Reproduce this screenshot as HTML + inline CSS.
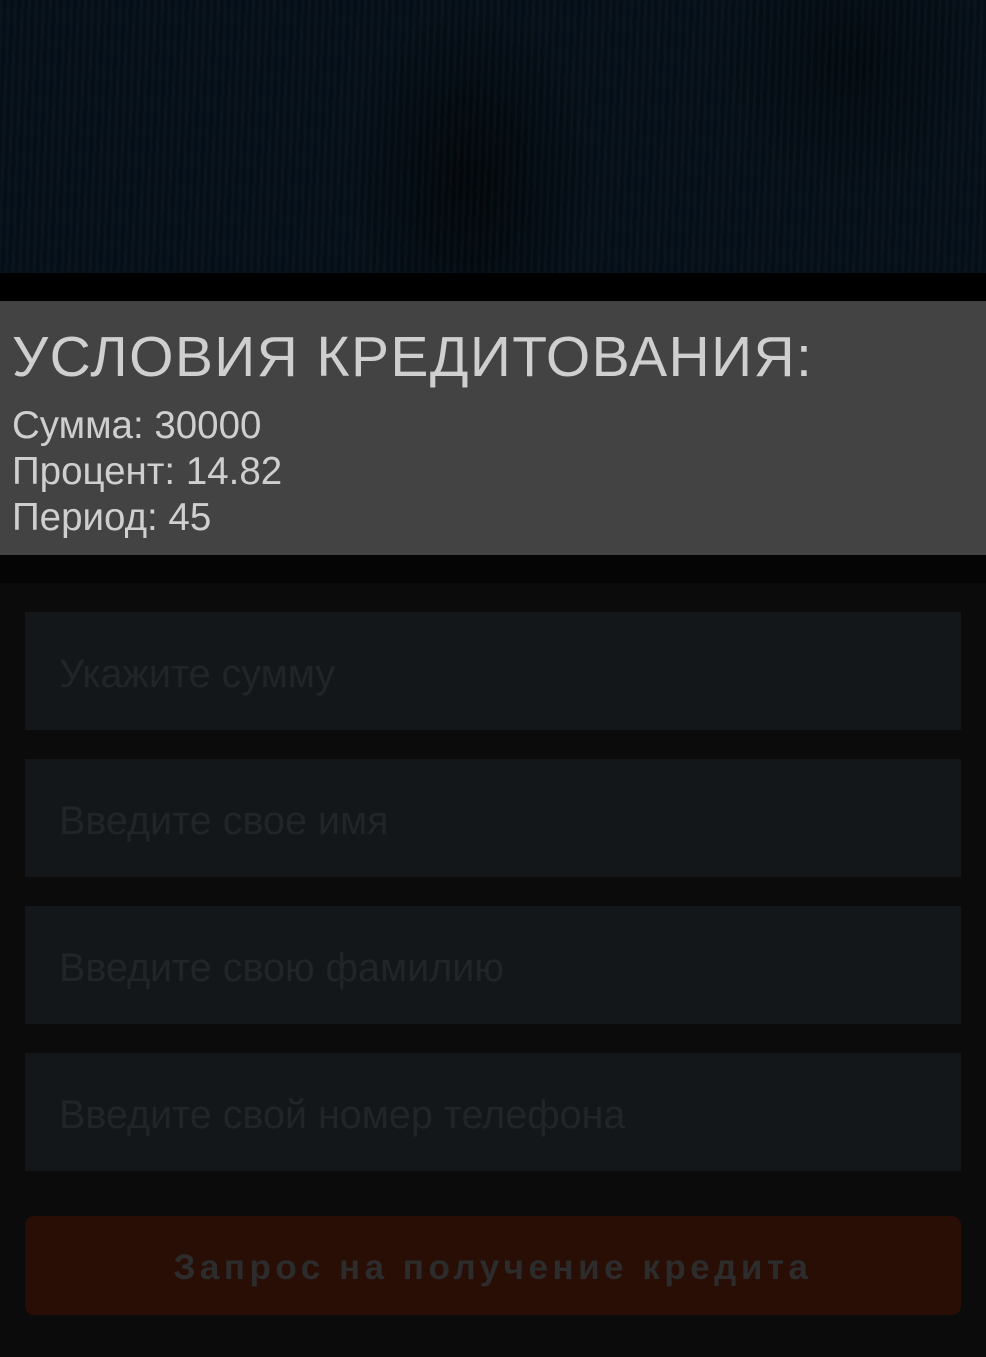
<!DOCTYPE html>
<html><head><meta charset="utf-8"><style>
html,body{margin:0;padding:0;width:986px;height:1357px;background:#0b0b0b;overflow:hidden;font-family:"Liberation Sans",sans-serif}
.hero{position:absolute;left:0;top:0;width:986px;height:273px;background:
repeating-linear-gradient(92deg,rgba(40,60,80,0.08) 0 3px,rgba(0,0,0,0.12) 3px 7px),
radial-gradient(ellipse 180px 260px at 470px 180px,rgba(0,0,0,0.55),transparent 70%),
radial-gradient(ellipse 200px 200px at 850px 60px,rgba(0,0,0,0.35),transparent 70%),
#07111a}
.blk1{position:absolute;left:0;top:273px;width:986px;height:28px;background:#000}
.box{position:absolute;left:0;top:301px;width:986px;height:254px;background:#434343;color:#cfcfcf}
.blk2{position:absolute;left:0;top:555px;width:986px;height:28px;background:#050505}
.t{position:absolute;left:12px;top:322px;font-size:57px;letter-spacing:1.4px;line-height:70px;white-space:nowrap}
.l{position:absolute;left:12px;font-size:38.5px;line-height:46px;white-space:nowrap}
.in{position:absolute;left:25px;width:936px;height:118px;background:#13171a;color:#222528;font-size:39.5px;line-height:124px;box-sizing:border-box;padding-left:34px;white-space:nowrap}
.btn{position:absolute;left:25px;top:1216px;width:936px;height:99px;background:#290e06;border-radius:9px;color:#2c2c2c;font-weight:bold;font-size:35px;line-height:103px;text-align:center;letter-spacing:4.5px;white-space:nowrap}
</style></head><body>
<div class="hero"></div>
<div class="blk1"></div>
<div class="box"></div>
<div class="t" style="color:#cfcfcf">УСЛОВИЯ КРЕДИТОВАНИЯ:</div>
<div class="l" style="top:403px;color:#cfcfcf">Сумма: 30000</div>
<div class="l" style="top:449px;color:#cfcfcf">Процент: 14.82</div>
<div class="l" style="top:495px;color:#cfcfcf">Период: 45</div>
<div class="blk2"></div>
<div class="in" style="top:612px">Укажите сумму</div>
<div class="in" style="top:759px">Введите свое имя</div>
<div class="in" style="top:906px">Введите свою фамилию</div>
<div class="in" style="top:1053px">Введите свой номер телефона</div>
<div class="btn">Запрос на получение кредита</div>
</body></html>
